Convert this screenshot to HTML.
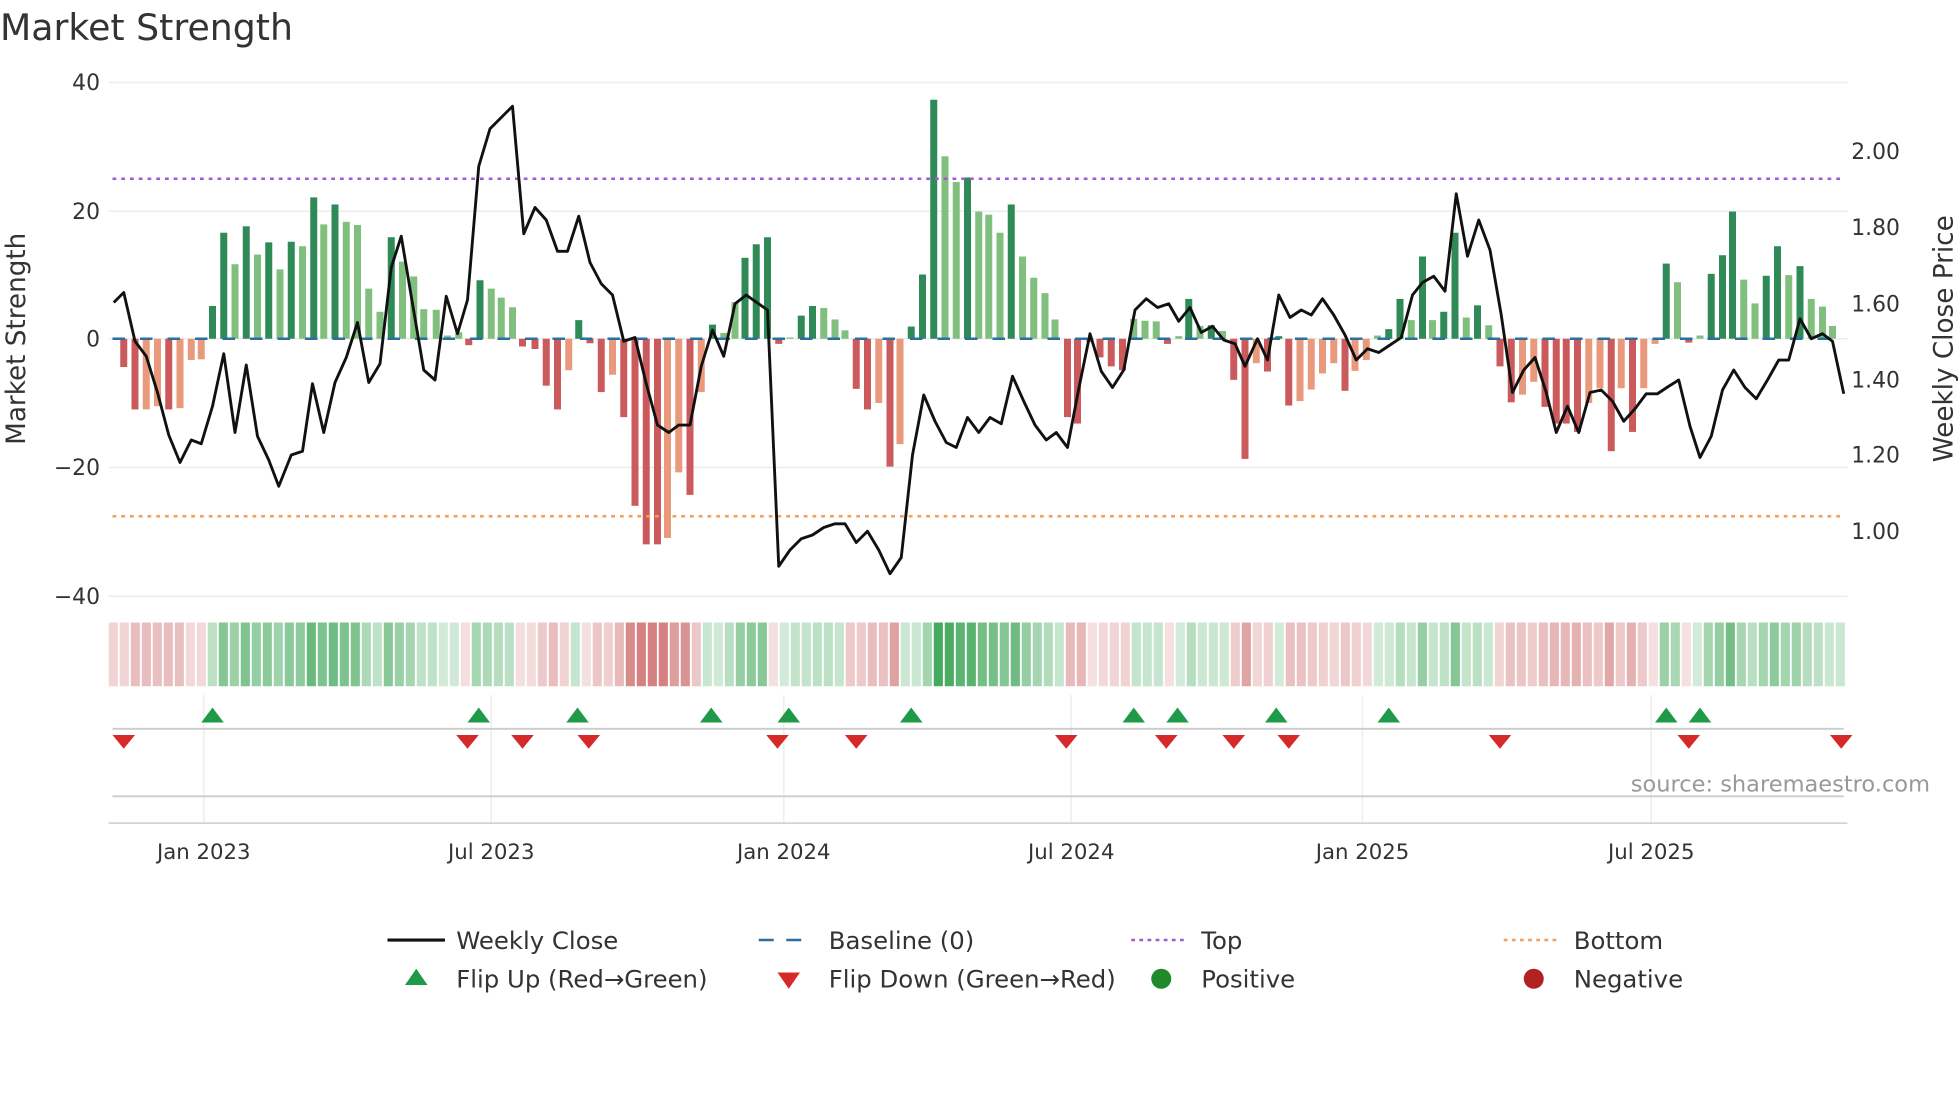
<!DOCTYPE html>
<html><head><meta charset="utf-8"><style>
html,body{margin:0;padding:0;background:#fff;overflow:hidden}
svg{display:block}
text{font-family:"DejaVu Sans","Liberation Sans",sans-serif;fill:#333}
</style></head><body>
<svg id="s" width="1960" height="1102" viewBox="0 0 1568 881.6" xmlns="http://www.w3.org/2000/svg">
<rect width="1568" height="882" fill="#fff"/>
<text x="0" y="32" font-size="29">Market Strength</text>
<g stroke="#ececec" stroke-width="1.2">
<line x1="87" x2="1478" y1="66" y2="66"/><line x1="87" x2="1478" y1="169" y2="169"/>
<line x1="87" x2="1478" y1="271" y2="271"/><line x1="87" x2="1478" y1="374" y2="374"/>
<line x1="87" x2="1478" y1="477" y2="477"/>
</g>
<g font-size="17.5" text-anchor="end">
<text x="80" y="72">40</text><text x="80" y="175">20</text><text x="80" y="277">0</text>
<text x="80" y="380">−20</text><text x="80" y="483">−40</text>
</g>
<g font-size="17.5">
<text x="1481" y="127">2.00</text><text x="1481" y="188">1.80</text><text x="1481" y="249">1.60</text>
<text x="1481" y="310">1.40</text><text x="1481" y="370">1.20</text><text x="1481" y="431">1.00</text>
</g>
<text transform="translate(20,271) rotate(-90)" font-size="21" text-anchor="middle">Market Strength</text>
<text transform="translate(1562,271) rotate(-90)" font-size="21" text-anchor="middle">Weekly Close Price</text>
<g id="bars"></g>
<line x1="90" x2="1475" y1="143" y2="143" stroke="#a259d9" stroke-width="2" stroke-dasharray="3,4"/>
<line x1="90" x2="1475" y1="413" y2="413" stroke="#f0a050" stroke-width="2" stroke-dasharray="3,4"/>
<line x1="90" x2="1475" y1="271" y2="271" stroke="#2a6fa0" stroke-width="2" stroke-dasharray="10,12"/>
<polyline id="price" fill="none" stroke="#111" stroke-width="2.3" stroke-linejoin="round"/>
<g id="heat"></g>
<g stroke="#eee" stroke-width="1.2">
<line x1="163" x2="163" y1="556" y2="658"/><line x1="393" x2="393" y1="556" y2="658"/>
<line x1="627" x2="627" y1="556" y2="658"/><line x1="857" x2="857" y1="556" y2="658"/>
<line x1="1090" x2="1090" y1="556" y2="658"/><line x1="1321" x2="1321" y1="556" y2="658"/>
</g>
<line x1="90" x2="1475" y1="583" y2="583" stroke="#ccc" stroke-width="1.5"/>
<line x1="90" x2="1475" y1="637" y2="637" stroke="#ccc" stroke-width="1.5"/>
<line x1="87" x2="1478" y1="658.5" y2="658.5" stroke="#ccc" stroke-width="1.2"/>
<g id="tri"></g>
<text x="1544" y="633" font-size="18" text-anchor="end" style="fill:#999">source: sharemaestro.com</text>
<g font-size="17" text-anchor="middle">
<text x="163" y="687">Jan 2023</text><text x="393" y="687">Jul 2023</text><text x="627" y="687">Jan 2024</text>
<text x="857" y="687">Jul 2024</text><text x="1090" y="687">Jan 2025</text><text x="1321" y="687">Jul 2025</text>
</g>
<g font-size="19.5">
<line x1="310" x2="356" y1="752" y2="752" stroke="#111" stroke-width="2.5"/><text x="365" y="759">Weekly Close</text>
<line x1="607" x2="651" y1="752" y2="752" stroke="#2a6fa0" stroke-width="2" stroke-dasharray="12,10"/><text x="663" y="759">Baseline (0)</text>
<line x1="905" x2="949" y1="752" y2="752" stroke="#a259d9" stroke-width="2" stroke-dasharray="3,3.5"/><text x="961" y="759">Top</text>
<line x1="1203" x2="1247" y1="752" y2="752" stroke="#f0a050" stroke-width="2" stroke-dasharray="3,3.5"/><text x="1259" y="759">Bottom</text>
<polygon points="324,788 342,788 333,775" fill="#1e9a48"/><text x="365" y="790">Flip Up (Red→Green)</text>
<polygon points="622,778 640,778 631,791" fill="#d62a2a"/><text x="663" y="790">Flip Down (Green→Red)</text>
<circle cx="929" cy="783" r="8" fill="#1e8a2a"/><text x="961" y="790">Positive</text>
<circle cx="1227" cy="783" r="8" fill="#b22222"/><text x="1259" y="790">Negative</text>
</g>
</svg>
<script>
var B=[[99,-4.4,'r'],[108,-11,'r'],[117,-11,'o'],[126,-10.5,'o'],[135,-11,'r'],[144,-10.8,'o'],[153,-3.3,'o'],[161,-3.2,'o'],[170,5.1,'d'],[179,16.5,'d'],[188,11.6,'l'],[197,17.5,'d'],[206,13.1,'l'],[215,15,'d'],[224,10.8,'l'],[233,15.1,'d'],[242,14.4,'l'],[251,22,'d'],[259,17.8,'l'],[268,20.9,'d'],[277,18.2,'l'],[286,17.7,'l'],[295,7.8,'l'],[304,4.2,'l'],[313,15.8,'d'],[322,12,'l'],[331,9.7,'l'],[339,4.6,'l'],[349,4.5,'l'],[358,0.5,'l'],[367,1,'l'],[375,-1,'r'],[384,9.1,'d'],[393,7.8,'l'],[401,6.4,'l'],[410,4.9,'l'],[418,-1.2,'r'],[428,-1.6,'r'],[437,-7.3,'r'],[446,-11,'r'],[455,-4.9,'o'],[463,2.9,'d'],[472,-0.7,'r'],[481,-8.3,'r'],[490,-5.6,'o'],[499,-12.2,'r'],[508,-26,'r'],[517,-32,'r'],[526,-32,'r'],[534,-31,'o'],[543,-20.8,'o'],[552,-24.3,'r'],[561,-8.3,'o'],[570,2.2,'d'],[579,0.9,'l'],[588,5.7,'l'],[596,12.6,'d'],[605,14.7,'d'],[614,15.8,'d'],[623,-0.8,'r'],[632,0.2,'l'],[641,3.6,'d'],[650,5.1,'d'],[659,4.8,'l'],[668,3,'l'],[676,1.3,'l'],[685,-7.8,'r'],[694,-11,'r'],[703,-10,'o'],[712,-19.9,'r'],[720,-16.4,'o'],[729,1.9,'d'],[738,10,'d'],[747,37.2,'d'],[756,28.4,'l'],[765,24.4,'l'],[774,25.1,'d'],[783,19.8,'l'],[791,19.3,'l'],[800,16.5,'l'],[809,20.9,'d'],[818,12.8,'l'],[827,9.5,'l'],[836,7.1,'l'],[844,3,'l'],[854,-12.2,'r'],[862,-13.2,'r'],[872,-0.5,'r'],[880,-2.9,'r'],[889,-4.3,'r'],[898,-4.9,'r'],[907,3.1,'l'],[916,2.8,'l'],[925,2.7,'l'],[934,-0.8,'r'],[943,0.4,'l'],[951,6.2,'d'],[960,2,'l'],[969,2.1,'d'],[978,1.2,'l'],[987,-6.4,'r'],[996,-18.7,'r'],[1005,-3.8,'o'],[1014,-5.1,'r'],[1023,0.4,'d'],[1031,-10.4,'r'],[1040,-9.7,'o'],[1049,-7.9,'o'],[1058,-5.4,'o'],[1067,-3.8,'o'],[1076,-8.1,'r'],[1084,-5,'o'],[1093,-3.3,'o'],[1102,0.5,'l'],[1111,1.5,'d'],[1120,6.2,'d'],[1129,2.9,'l'],[1138,12.8,'d'],[1146,2.9,'l'],[1155,4.2,'d'],[1164,16.5,'d'],[1173,3.3,'l'],[1182,5.2,'d'],[1191,2.1,'l'],[1200,-4.3,'r'],[1209,-9.9,'r'],[1218,-8.7,'o'],[1227,-6.7,'o'],[1236,-10.6,'r'],[1245,-13.2,'r'],[1253,-13.2,'r'],[1262,-14.5,'r'],[1271,-10,'o'],[1280,-7.7,'o'],[1289,-17.5,'r'],[1297,-7.7,'o'],[1306,-14.5,'r'],[1315,-7.7,'o'],[1324,-0.8,'o'],[1333,11.7,'d'],[1342,8.8,'l'],[1351,-0.6,'r'],[1360,0.5,'l'],[1369,10.1,'d'],[1378,13,'d'],[1386,19.8,'d'],[1395,9.2,'l'],[1404,5.5,'l'],[1413,9.8,'d'],[1422,14.4,'d'],[1431,9.9,'l'],[1440,11.3,'d'],[1449,6.2,'l'],[1458,5,'l'],[1466,2,'l']];
var C={d:'#2f8a57',l:'#80bf7e',r:'#cb5a5c',o:'#e99a7c'};
var NS='http://www.w3.org/2000/svg';
function el(p,t,a){var e=document.createElementNS(NS,t);for(var k in a)e.setAttribute(k,a[k]);p.appendChild(e);return e;}
var gb=document.getElementById('bars'),gh=document.getElementById('heat');
B.forEach(function(b){var y=271-b[1]*5.14;el(gb,'rect',{x:b[0]-2.8,y:Math.min(y,271),width:5.6,height:Math.abs(271-y),fill:C[b[2]]});});
for(var i=0;i<158;i++){var x=87+i*8.8;var v=0;var best=99;B.forEach(function(b){var d=Math.abs(b[0]-(x+4));if(d<best){best=d;v=b[1];}});
var a=Math.min(0.95,0.22+Math.abs(v)/40);var col=v>=0?'rgba(60,165,85,'+a.toFixed(2)+')':'rgba(200,90,90,'+(a*0.8).toFixed(2)+')';
if(x+7.3>1479)break;el(gh,'rect',{x:x,y:498,width:7.3,height:51,fill:col});}
var P="91,242 99,234 108,273 117,285 126,314 135,348 144,370 153,352 161,355 170,325 179,283 188,346 197,292 206,349 215,368 223,389 233,364 242,361 250,307 259,346 268,306 277,286 286,258 295,306 304,291 313,214 321,189 330,243 339,296 348,304 357,237 366,267 374,240 383,133 392,103 410,85 419,187 428,166 437,176 446,201 454,201 463,173 472,210 481,227 490,236 499,273 508,270 517,307 526,340 535,346 543,340 552,340 561,293 570,264 579,285 588,243 597,236 614,248 623,453 632,440 641,431 650,428 659,422 668,419 676,419 685,434 694,425 703,440 712,459 721,446 730,364 739,316 748,337 757,354 765,358 774,334 783,346 792,334 801,339 810,301 819,321 828,340 837,352 845,346 854,358 863,311 872,267 881,297 890,310 899,296 908,248 917,239 926,246 935,243 943,257 952,246 961,266 970,261 979,272 988,275 996,293 1006,271 1014,288 1023,236 1032,254 1041,248 1049,252 1058,239 1067,252 1076,268 1085,288 1094,279 1103,282 1112,276 1121,270 1130,236 1138,226 1147,221 1156,233 1165,155 1174,205 1183,176 1192,200 1201,252 1210,314 1219,296 1228,286 1237,314 1245,346 1254,325 1263,346 1272,314 1281,312 1290,321 1299,337 1308,327 1317,315 1326,315 1335,309 1343,304 1352,341 1360,366 1369,349 1378,312 1387,296 1396,310 1405,319 1414,304 1423,288 1431,288 1440,255 1449,271 1458,267 1466,273 1475,315";
document.getElementById('price').setAttribute('points',P);
var gt=document.getElementById('tri');
[170,383,462,569,631,729,907,942,1021,1111,1333,1360].forEach(function(x){el(gt,'polygon',{points:(x-9)+',578 '+(x+9)+',578 '+x+',566',fill:'#1e9a48'});});
[99,374,418,471,622,685,853,933,987,1031,1200,1351,1473].forEach(function(x){el(gt,'polygon',{points:(x-9)+',588 '+(x+9)+',588 '+x+',599',fill:'#d62a2a'});});
</script>
</body></html>
